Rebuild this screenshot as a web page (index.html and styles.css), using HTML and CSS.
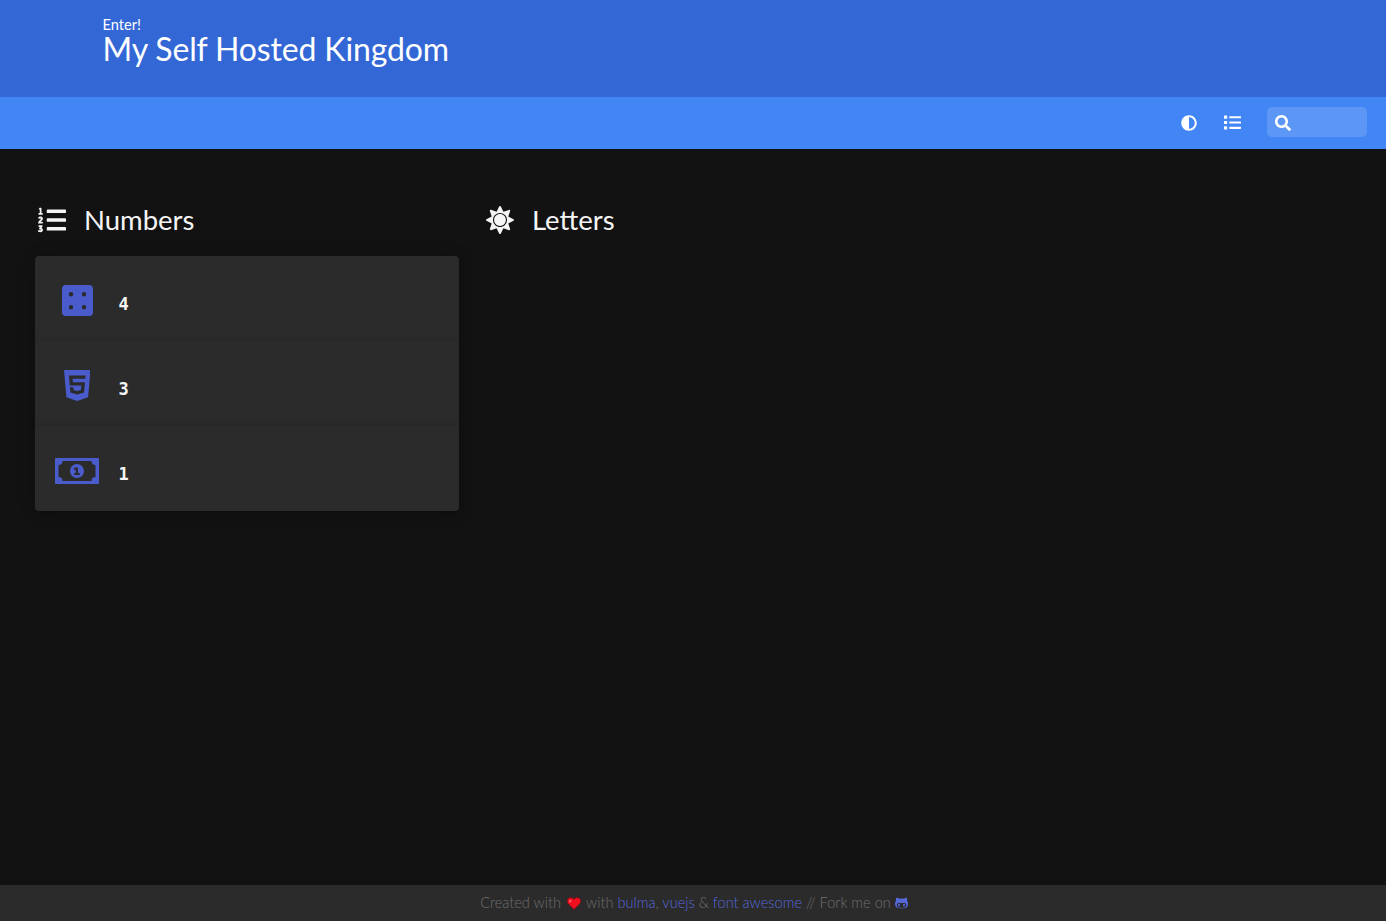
FILE: index.html
```html
<!DOCTYPE html>
<html lang="en">
<head>
<meta charset="utf-8">
<title>My Self Hosted Kingdom</title>
<link rel="stylesheet" href="styles.css">
</head>
<body>
<div class="page">
  <header class="hero">
    <div class="hero-text">
      <p class="subtitle">Enter!</p>
      <h1 class="title">My Self Hosted Kingdom</h1>
    </div>
  </header>
  <nav class="navbar">
    <a class="nav-icon" aria-label="Toggle theme">
      <svg class="ico-16" viewBox="0 0 512 512"><path fill="currentColor" d="M8 256c0 136.966 111.033 248 248 248s248-111.034 248-248S392.966 8 256 8 8 119.033 8 256zm248 184V72c101.705 0 184 82.311 184 184 0 101.705-82.311 184-184 184z"/></svg>
    </a>
    <a class="nav-icon nav-icon-list" aria-label="Toggle layout">
      <svg class="ico-17" viewBox="0 0 512 512"><path fill="currentColor" d="M80 368H16a16 16 0 0 0-16 16v64a16 16 0 0 0 16 16h64a16 16 0 0 0 16-16v-64a16 16 0 0 0-16-16zm0-320H16A16 16 0 0 0 0 64v64a16 16 0 0 0 16 16h64a16 16 0 0 0 16-16V64a16 16 0 0 0-16-16zm0 160H16a16 16 0 0 0-16 16v64a16 16 0 0 0 16 16h64a16 16 0 0 0 16-16v-64a16 16 0 0 0-16-16zm416 176H176a16 16 0 0 0-16 16v32a16 16 0 0 0 16 16h320a16 16 0 0 0 16-16v-32a16 16 0 0 0-16-16zm0-320H176a16 16 0 0 0-16 16v32a16 16 0 0 0 16 16h320a16 16 0 0 0 16-16V80a16 16 0 0 0-16-16zm0 160H176a16 16 0 0 0-16 16v32a16 16 0 0 0 16 16h320a16 16 0 0 0 16-16v-32a16 16 0 0 0-16-16z"/></svg>
    </a>
    <div class="search">
      <svg class="ico-16" viewBox="0 0 512 512"><path fill="currentColor" d="M505 442.7L405.3 343c-4.5-4.5-10.6-7-17-7H372c27.6-35.3 44-79.7 44-128C416 93.1 322.9 0 208 0S0 93.1 0 208s93.1 208 208 208c48.3 0 92.7-16.4 128-44v16.3c0 6.4 2.5 12.5 7 17l99.7 99.7c9.4 9.4 24.6 9.4 33.9 0l28.3-28.3c9.4-9.4 9.4-24.6.1-34zM208 336c-70.7 0-128-57.2-128-128 0-70.7 57.2-128 128-128 70.7 0 128 57.2 128 128 0 70.7-57.2 128-128 128z"/></svg>
    </div>
  </nav>
  <main class="content">
    <section class="group">
      <h2 class="group-title">
        <span class="group-icon">
          <svg class="ico-head" viewBox="0 0 512 512"><path fill="currentColor" d="M61.77 401l17.5-20.15a19.92 19.92 0 0 0 5.07-14.19v-3.31C84.34 356 80.5 352 73 352H16a8 8 0 0 0-8 8v16a8 8 0 0 0 8 8h22.83a157.41 157.41 0 0 0-11 12.31l-5.61 7c-4 5.07-5.25 10.13-2.8 14.88l1.05 1.93c3 5.76 6.29 7.88 12.25 7.88h4.73c10.33 0 15.94 2.44 15.94 9.09 0 4.72-4.2 8.22-14.36 8.22a41.54 41.54 0 0 1-15.47-3.12c-6.49-3.88-11.74-3.5-15.6 3.12l-5.59 9.31c-3.72 6.13-3.19 11.72 2.63 15.94 7.71 4.69 20.38 9.44 37 9.44 34.16 0 48.5-22.75 48.5-44.12-.03-14.38-9.12-29.76-28.73-34.88zM496 224H176a16 16 0 0 0-16 16v32a16 16 0 0 0 16 16h320a16 16 0 0 0 16-16v-32a16 16 0 0 0-16-16zm0-160H176a16 16 0 0 0-16 16v32a16 16 0 0 0 16 16h320a16 16 0 0 0 16-16V80a16 16 0 0 0-16-16zm0 320H176a16 16 0 0 0-16 16v32a16 16 0 0 0 16 16h320a16 16 0 0 0 16-16v-32a16 16 0 0 0-16-16zM16 160h64a8 8 0 0 0 8-8v-16a8 8 0 0 0-8-8H64V40a8 8 0 0 0-8-8H32a8 8 0 0 0-7.14 4.42l-8 16A8 8 0 0 0 24 64h8v64H16a8 8 0 0 0-8 8v16a8 8 0 0 0 8 8zm-3.91 160H80a8 8 0 0 0 8-8v-16a8 8 0 0 0-8-8H41.32c3.29-10.29 48.34-18.68 48.34-56.44 0-29.06-25-39.56-44.47-39.56-21.36 0-33.8 10-40.46 18.75-4.37 5.59-3 10.84 2.8 15.37l8.58 6.88c5.61 4.56 11 2.47 16.12-2.44a13.44 13.44 0 0 1 9.46-3.84c3.33 0 9.28 1.56 9.28 8.75C51 254.4 4 263.07 4 310.88v4.5A4.62 4.62 0 0 0 12.09 320z"/></svg>
        </span>
        <span>Numbers</span>
      </h2>
      <div class="card">
        <div class="item">
          <span class="item-icon">
            <svg class="ico-dice" viewBox="0 0 31 31"><path fill="currentColor" fill-rule="evenodd" d="M4 0h23a4 4 0 0 1 4 4v23a4 4 0 0 1-4 4H4a4 4 0 0 1-4-4V4a4 4 0 0 1 4-4zM9 7a2.2 2.2 0 1 0 0 4.4A2.2 2.2 0 0 0 9 7zm13 0a2.2 2.2 0 1 0 0 4.4A2.2 2.2 0 0 0 22 7zM9 20a2.2 2.2 0 1 0 0 4.4A2.2 2.2 0 0 0 9 20zm13 0a2.2 2.2 0 1 0 0 4.4A2.2 2.2 0 0 0 22 20z"/></svg>
          </span>
          <span class="item-name">4</span>
        </div>
        <div class="item">
          <span class="item-icon">
            <svg class="ico-html" viewBox="0 32 384 448"><path fill="currentColor" d="M0 32l34.9 395.8L191.5 480l157.6-52.2L384 32H0zm308.2 127.9H124.4l4.1 49.4h175.6l-13.6 148.4-97.9 27v.3h-1.1l-98.7-27.3-6-75.8h47.7L138 320l53.5 14.5 53.7-14.5 6-62.2H84.3L71.5 112.2h241.1l-4.4 47.7z"/></svg>
          </span>
          <span class="item-name">3</span>
        </div>
        <div class="item">
          <span class="item-icon">
            <svg class="ico-bill" viewBox="0 0 44 26"><path fill="currentColor" fill-rule="evenodd" d="M1 0h42a1 1 0 0 1 1 1v24a1 1 0 0 1-1 1H1a1 1 0 0 1-1-1V1a1 1 0 0 1 1-1zM7.5 3A4 4 0 0 1 3.5 7V19A4 4 0 0 1 7.5 23H36.500A4 4 0 0 1 40.500 19V7A4 4 0 0 1 36.500 3z"/><path fill="currentColor" fill-rule="evenodd" d="M22 6a7 7 0 1 0 0 14 7 7 0 0 0 0-14zm-2.400 3.500h3.400v5.600h1.700v1.900h-5.500v-1.900h1.600v-3.300l-1.300.5-.6-1.600z"/></svg>
          </span>
          <span class="item-name">1</span>
        </div>
      </div>
    </section>
    <section class="group">
      <h2 class="group-title">
        <span class="group-icon">
          <svg class="ico-head" viewBox="0 0 512 512"><path fill="currentColor" d="M256 148c-59.600 0-108 48.400-108 108s48.400 108 108 108 108-48.400 108-108-48.400-108-108-108zm246.400 92.500l-94.700-47.300 33.500-100.400c4.500-13.600-8.400-26.500-21.900-21.900l-100.400 33.500-47.400-94.800c-6.400-12.800-24.600-12.800-31 0l-47.300 94.700L92.700 70.800c-13.600-4.500-26.500 8.400-21.900 21.900l33.500 100.400-94.700 47.400c-12.800 6.400-12.800 24.600 0 31l94.700 47.300-33.500 100.500c-4.500 13.600 8.400 26.500 21.900 21.900l100.400-33.500 47.300 94.700c6.400 12.800 24.600 12.800 31 0l47.300-94.700 100.400 33.500c13.600 4.500 26.500-8.400 21.900-21.900l-33.500-100.400 94.700-47.300c13-6.500 13-24.700.2-31.100zm-155.900 106c-49.900 49.900-131.100 49.900-181 0-49.900-49.900-49.900-131.100 0-181 49.900-49.900 131.100-49.900 181 0 49.900 49.900 49.900 131.100 0 181z"/></svg>
        </span>
        <span>Letters</span>
      </h2>
    </section>
  </main>
  <footer class="footer">
    <span>Created with</span>
    <span class="heart">
      <svg class="ico-heart" viewBox="0 0 13 12"><path fill="#f2101f" stroke="#6a0c12" stroke-width=".6" d="M6.500 11.600L1.100 6.200C-.5 4.400.2 1.600 2 .8c1.700-.8 3.400-.2 4.500 1.400C7.600.6 9.300 0 11 .8c1.800.8 2.500 3.600.9 5.400z"/><path fill="none" stroke="#ff9a9a" stroke-width="1" d="M2.300 4.800l1.500-2"/></svg>
    </span>
    <span>with <a class="link">bulma</a>, <a class="link">vuejs</a> &amp; <a class="link">font awesome</a> // Fork me on</span>
    <svg class="ico-gh" viewBox="0 0 480 512"><path fill="currentColor" d="M186.100 328.700c0 20.900-10.900 55.100-36.700 55.100s-36.700-34.200-36.700-55.100 10.900-55.100 36.700-55.100 36.700 34.200 36.700 55.100zM480 278.200c0 31.900-3.200 65.700-17.500 95-37.900 76.600-142.100 74.800-216.700 74.800-75.800 0-186.200 2.700-225.600-74.800-14.600-29-20.200-63.100-20.200-95 0-41.900 13.900-81.500 41.500-113.600-5.200-15.800-7.700-32.400-7.700-48.800 0-21.500 4.900-32.300 14.600-51.800 45.300 0 74.300 9 108.800 36 29-6.900 58.800-10 88.700-10 27 0 54.200 2.900 80.400 9.200 34-26.700 63-35.200 107.800-35.200 9.800 19.500 14.600 30.300 14.600 51.800 0 16.400-2.600 32.700-7.700 48.200 27.500 32.400 39 72.400 39 114.200zm-64.300 50.500c0-43.900-26.700-82.600-73.500-82.600-18.900 0-37 3.400-56 6-14.900 2.300-29.800 3.200-45.100 3.200-15.200 0-30.100-.9-45.100-3.200-18.700-2.600-37-6-56-6-46.800 0-73.500 38.700-73.500 82.600 0 87.800 80.400 101.300 150.400 101.300h48.200c70.300 0 150.600-13.400 150.600-101.300zm-82.600-55.100c-25.800 0-36.700 34.200-36.700 55.100s10.900 55.100 36.700 55.100 36.700-34.200 36.700-55.100-10.900-55.100-36.700-55.100z"/></svg>
  </footer>
</div>
</body>
</html>
```
FILE: styles.css
```css
* { box-sizing: border-box; }
html, body { margin: 0; height: 100%; }
body { background: #121212; font-family: "Lato", "Liberation Sans", sans-serif; color: #f5f5f5; }
svg { display: block; }
.page { height: 921px; display: flex; flex-direction: column; overflow: hidden; }

.hero { height: 97px; background: #3367d6; padding: 16px 0 0 102.5px; color: #fff; }
.subtitle { margin: 0; font-size: 14.6px; line-height: 17px; font-weight: 400; color: #fff; }
.title { margin: 0; font-size: 32px; line-height: 32px; font-weight: 400; letter-spacing: -.15px; }

.navbar { height: 52px; background: #4285f4; color: #fff; display: flex; align-items: center; justify-content: flex-end; padding-right: 19px; }
.nav-icon { display: flex; align-items: center; justify-content: center; width: 44px; height: 52px; }
.nav-icon-list { padding: 0 1px 2px 0; }
.search { width: 100px; height: 30px; margin: 0 0 2px 12px; padding: 2px 0 0 8px; background: #5c97f6; border-radius: 5px; display: flex; align-items: center; }
.ico-16 { width: 16px; height: 16px; }
.ico-17 { width: 17px; height: 17px; }

.content { flex: 1; display: grid; grid-template-columns: 424px 424px; column-gap: 24px; align-items: start; padding: 41px 0 0 35px; }
.group-title { margin: 0 0 7px; height: 59px; display: flex; align-items: center; font-size: 27.5px; font-weight: 400; color: #f5f5f5; }
.group-icon { width: 49px; padding-left: 3px; display: flex; }
.ico-head { width: 28px; height: 28px; }

.card { background: #2b2b2b; border-radius: 4px; box-shadow: 0 2px 15px rgba(0,0,0,.3); }
.item { height: 85px; display: flex; align-items: center; padding: 5px 0 0 20px; box-shadow: inset 0 -6px 6px -4px rgba(0,0,0,.07); }
.item:last-child { box-shadow: none; }
.item-icon { width: 44px; display: flex; justify-content: center; margin-right: 19.5px; color: #4a5ccb; }
.item-name { margin-top: 5px; font-family: "DejaVu Sans Mono", monospace; font-weight: 700; font-size: 17px; color: #f5f5f5; }
.ico-dice { width: 31px; height: 31px; margin-bottom: 2px; }
.ico-html { width: 26.5px; height: 31px; margin-bottom: 2px; }
.ico-bill { width: 44px; height: 26px; }

.footer { height: 36px; padding: 0 0 2px 2px; background: #2b2b2b; color: #6f6f6f; display: flex; align-items: center; justify-content: center; font-size: 14.6px; font-weight: 300; }
.link { color: #5568dc; }
.heart { margin: 0 5.5px; }
.ico-heart { width: 14px; height: 13px; margin-top: 2px; }
.ico-gh { width: 13px; height: 14px; margin: 1px 0 0 4px; color: #5568dc; }
```
